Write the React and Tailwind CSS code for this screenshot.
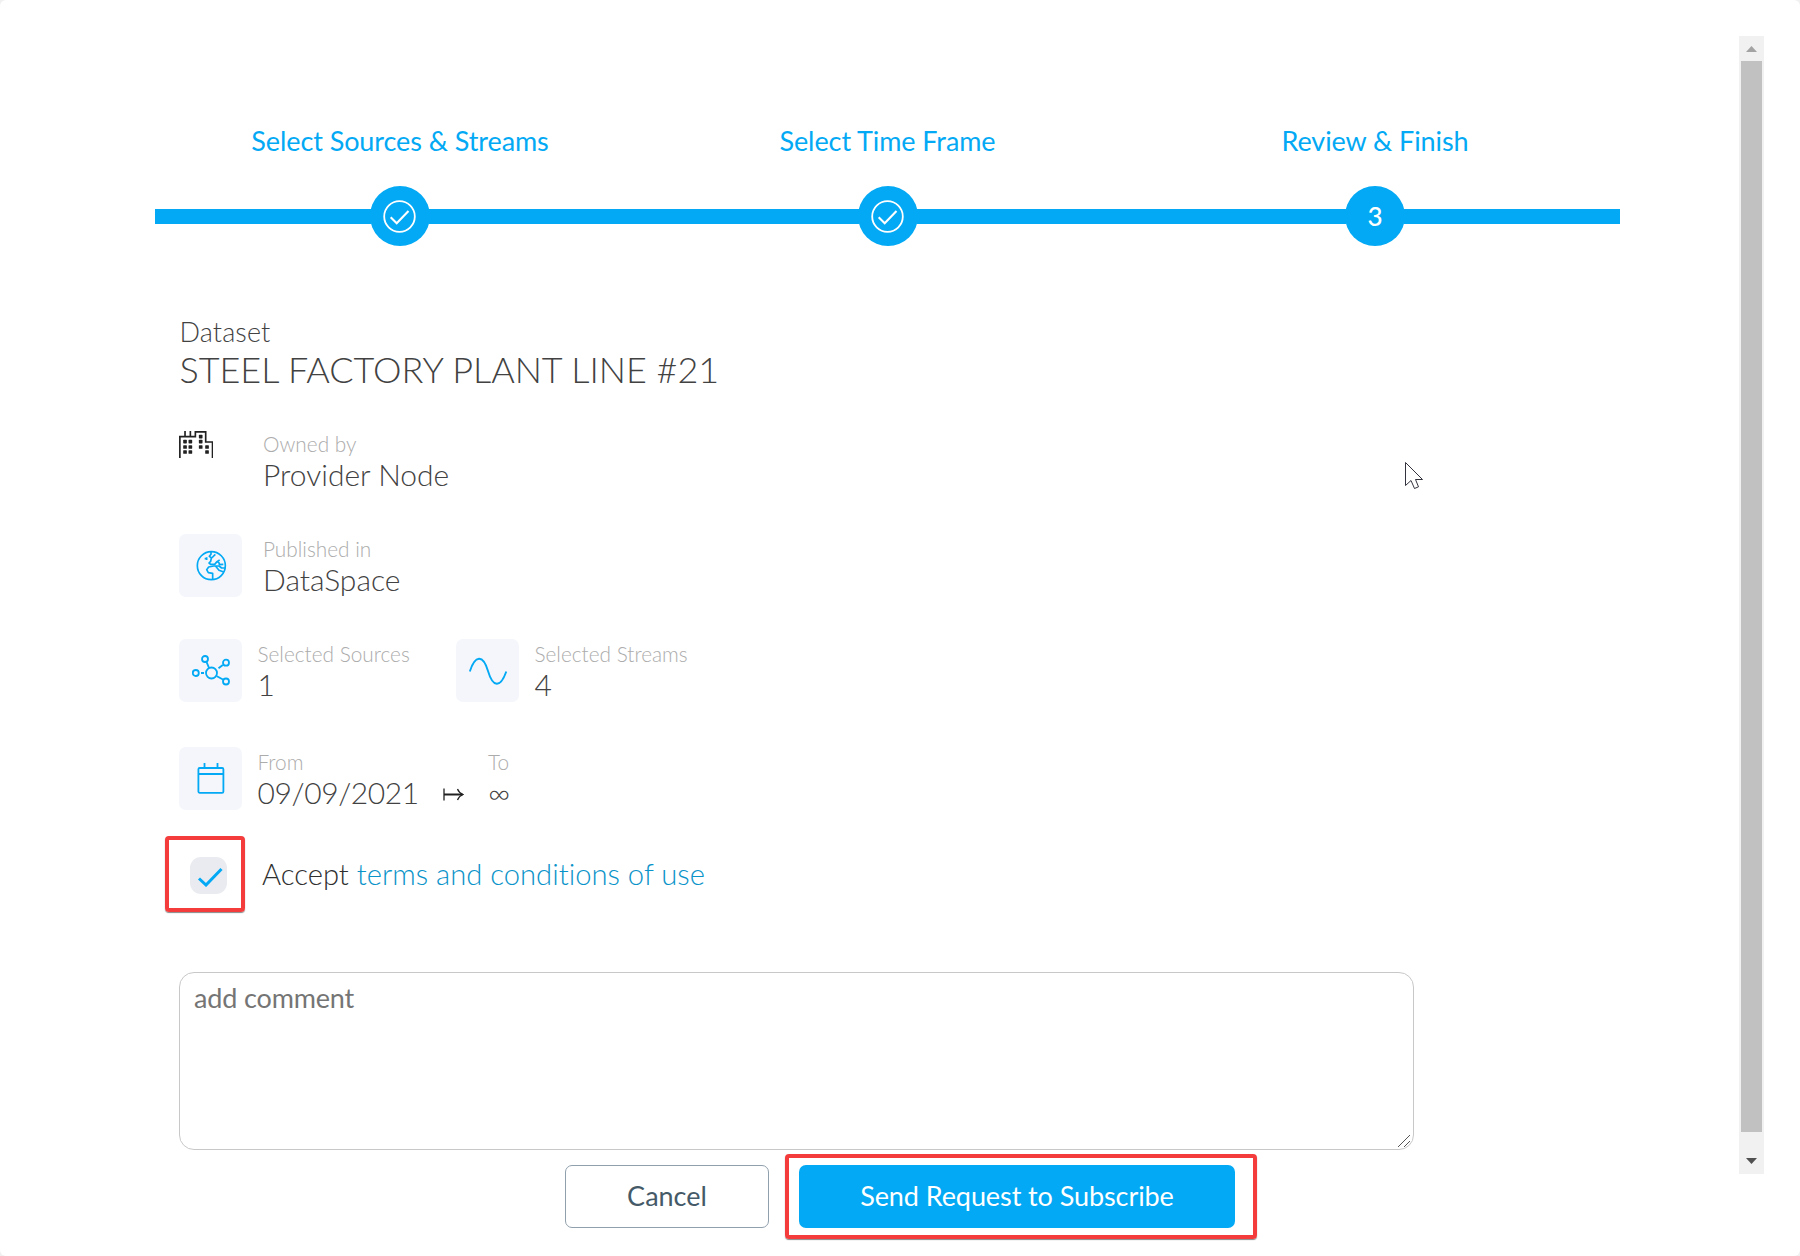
const BLUE = "#03a9f4";

function CheckCircle() {
  return (
    <svg width="34" height="34" viewBox="0 0 34 34" fill="none" stroke="#fff">
      <circle cx="16.5" cy="17.5" r="15.3" strokeWidth="1.8" />
      <path d="M7.7 18.3 L13.7 24.3 L25.5 12" strokeWidth="2.1" />
    </svg>
  );
}

function Step({ label, className, children }) {
  return (
    <div className={"flex flex-col items-center " + className}>
      <div className="h-[36px] text-[27px] leading-[36px] tracking-[-0.08px] whitespace-nowrap text-[#03a9f4]">{label}</div>
      <div className="mt-[27px] flex w-full items-center">
        <div className="h-[15px] flex-1 bg-[#03a9f4]" />
        <div className="-mx-px flex size-[60px] items-center justify-center rounded-full bg-[#03a9f4] text-[26px] font-medium text-white">
          {children}
        </div>
        <div className="h-[15px] flex-1 bg-[#03a9f4]" />
      </div>
    </div>
  );
}

function Tile({ children }) {
  return (
    <div className="flex size-[63px] shrink-0 items-center justify-center rounded-[7px] bg-[#f4f6fb]">{children}</div>
  );
}

function Field({ label, value, className = "", valueClass = "" }) {
  return (
    <div className={"font-light whitespace-nowrap " + className}>
      <div className="h-[25px] text-[20.8px] leading-[26px] text-[#acacac]">{label}</div>
      <div className={"h-[36px] text-[30px] leading-[36px] text-[#424242] " + valueClass}>{value}</div>
    </div>
  );
}

function Building() {
  const panes = [[75, 95], [91, 95], [75, 111], [91, 111], [75, 126], [91, 126], [122, 80], [122, 95], [122, 111], [141, 111], [141, 126]];
  return (
    <svg width="34.4" height="27" viewBox="57 63 103 81" fill="none" stroke="#212121" strokeWidth="5">
      <path d="M59.5 144V80H106V65.500H137V96H157.500V144M75 63V80M91 63V80" />
      {panes.map(([x, y]) => (
        <rect key={x + "-" + y} x={x - 5.500} y={y - 5.500} width="11" height="11" rx="2" fill="#212121" stroke="none" />
      ))}
    </svg>
  );
}

function Globe() {
  return (
    <svg className="ml-px" width="31" height="31" viewBox="107 421 93 93" fill="none" stroke={BLUE} strokeWidth="5" strokeLinejoin="round">
      <circle cx="153" cy="468" r="42" />
      <path d="M133 447H141M139 443V451M152 427V434L147 440L154 445L165 434M153 445L151 455L146 460L151 464H163L170 456L178 451M172 456L177 461V465L189 464" />
      <path d="M194 475H184L176 469H160L145 472L139 480L144 489L157 491V509M166 470L176 482L190 487" />
    </svg>
  );
}

function Network() {
  return (
    <svg width="38" height="32" viewBox="0 0 38 32" fill="none" stroke={BLUE} strokeWidth="1.8">
      <circle cx="19.5" cy="18" r="5.500" />
      <circle cx="13" cy="4" r="3" />
      <circle cx="34" cy="7.700" r="3" />
      <circle cx="3.800" cy="18" r="3" />
      <circle cx="34" cy="26.500" r="3" />
      <path d="M14.400 6.700L17 12.800M24.500 21L31.400 24.800M9 18H12M26.500 13.300L30.800 10" />
    </svg>
  );
}

function Wave() {
  return (
    <svg width="38" height="28" viewBox="0 0 38 28" fill="none" stroke={BLUE} strokeWidth="1.900">
      <path d="M.8 14.500C6 -2 14 -3 19 14C24 31 31.500 31 37.300 14.500" />
    </svg>
  );
}

function Calendar() {
  return (
    <svg width="28" height="31" viewBox="0 0 28 31" fill="none" stroke={BLUE} strokeWidth="1.800">
      <rect x="1.400" y="5" width="25" height="24.800" rx="1.300" />
      <path d="M1.400 11H26.400M7.500 0V5M20.500 0V5" />
    </svg>
  );
}

export default function App() {
  return (
    <div className="bg-[#f0f0f0]">
      <div className="flex h-[1256px] w-[1800px] overflow-hidden rounded-[6px] bg-white font-['Lato',sans-serif] [font-variant-ligatures:none]">
        <main className="flex w-[1739px] flex-col pt-[123px]">
          <div className="ml-[155px] flex w-[1465px]">
            <Step className="w-[490px]" label="Select Sources & Streams"><CheckCircle /></Step>
            <Step className="w-[485px]" label="Select Time Frame"><CheckCircle /></Step>
            <Step className="w-[490px]" label="Review & Finish">3</Step>
          </div>

          <div className="mt-[68px] ml-[179.500px] h-[89px] font-light whitespace-nowrap text-[#424242]">
            <div className="h-[34px] text-[27px] leading-[35px] tracking-[0.12px]">Dataset</div>
            <div className="h-[42px] text-[36px] leading-[42px] tracking-[-0.04px]">STEEL FACTORY PLANT LINE #21</div>
          </div>

          <div className="ml-[179px] flex h-[103px] pt-[28px]">
            <div className="w-[84px]"><Building /></div>
            <Field label="Owned by" value="Provider Node" />
          </div>

          <div className="ml-[179px] flex h-[105px] pt-[28px]">
            <div className="w-[84px]"><Tile><Globe /></Tile></div>
            <Field className="pt-[2px]" label="Published in" value="DataSpace" />
          </div>

          <div className="ml-[179px] flex h-[108px] pt-[28px]">
            <Tile><Network /></Tile>
            <Field label="Selected Sources" value="1" className="ml-[15.500px] w-[198.500px] pt-[2px]" />
            <Tile><Wave /></Tile>
            <Field label="Selected Streams" value="4" className="ml-[15.500px] pt-[2px]" />
          </div>

          <div className="ml-[179px] flex h-[117px] pt-[28px]">
            <Tile><Calendar /></Tile>
            <Field label="From" value="09/09/2021" className="ml-[15.500px] w-[185.500px] pt-[2px]" valueClass="tracking-[-0.4px]" />
            <svg className="mt-[41px] mr-[24px]" width="21" height="13" viewBox="0 0 21 13" fill="none" stroke="#212121">
              <path d="M1 .5V12.500" strokeWidth="1.300" />
              <path d="M1 6.500H19.500" strokeWidth="2" />
              <path d="M14.500 1Q16 5 20 6.500Q16 8 14.500 12" strokeWidth="1.300" />
            </svg>
            <Field className="pt-[2px]" label="To" value="∞" />
          </div>

          <div className="ml-[165px] flex h-[77px] items-start">
            <div className="flex h-[76px] w-[80px] items-center rounded-[4px] border-4 border-[#f43c3c] pt-[2px] pl-[21px] shadow-[0_1px_1px_#888]">
              <div className="flex size-[37px] items-center justify-center rounded-[11px] bg-[#e9ebf0] pt-[3px] pl-[3px]">
                <svg width="26" height="20" viewBox="0 0 26 20" fill="none" stroke={BLUE} strokeWidth="3">
                  <path d="M2 11.500L9 18L24.500 2" />
                </svg>
              </div>
            </div>
            <div className="ml-[17px] text-[29.2px] leading-[75px] font-light whitespace-nowrap text-[#303030]">
              Accept <a className="text-[#0a93c9]">terms and conditions of use</a>
            </div>
          </div>

          <div className="mt-[59px] ml-[179px] flex h-[178px] w-[1235px] justify-between rounded-[15px] border border-[#c8c8c8] px-[14px] pt-[8px] text-[27px] leading-[34px] tracking-[-0.15px] text-[#757575]">
            <span>add comment</span>
            <svg className="-mr-[13px] mt-[153px]" width="14" height="14" viewBox="0 0 14 14" stroke="#555" strokeWidth="1">
              <path d="M0 13L12 1M6 13L12 7" />
            </svg>
          </div>

          <div className="ml-[565px] flex h-[94px] items-start pt-[4px]">
            <button className="mt-[11px] h-[63px] w-[204px] rounded-[7px] border border-[#90a0ac] text-[27px] text-[#455a68]">Cancel</button>
            <div className="ml-[16px] h-[85px] w-[472px] rounded-[4px] border-4 border-[#f43c3c] pt-[7px] pl-[10px] shadow-[0_1px_1px_#888]">
              <button className="h-[63px] w-[436px] rounded-[7px] bg-[#03a9f4] text-[27px] tracking-[-0.08px] text-white">Send Request to Subscribe</button>
            </div>
          </div>
        </main>

        <div className="mt-[36px] flex h-[1138px] w-[25px] flex-col items-center bg-[#f1f1f1]">
          <svg className="mt-[10px]" width="11" height="6" viewBox="0 0 11 6"><path d="M0 6L5.500 0L11 6Z" fill="#a3a3a3" /></svg>
          <div className="mt-[9px] h-[1071px] w-[21px] bg-[#c1c1c1]" />
          <svg className="mt-[26px]" width="11" height="6" viewBox="0 0 11 6"><path d="M0 0L5.500 6L11 0Z" fill="#505050" /></svg>
        </div>

        <svg className="absolute left-[1404px] top-[461px]" width="20" height="29" viewBox="0 0 20 29" fill="#fff" stroke="#1c1c28" strokeWidth="0.9">
          <path d="M1.500 1.500V24.500L7 19.500L10.500 27.500L14.500 25.800L11.500 18.500H18.500Z" />
        </svg>
      </div>
    </div>
  );
}
